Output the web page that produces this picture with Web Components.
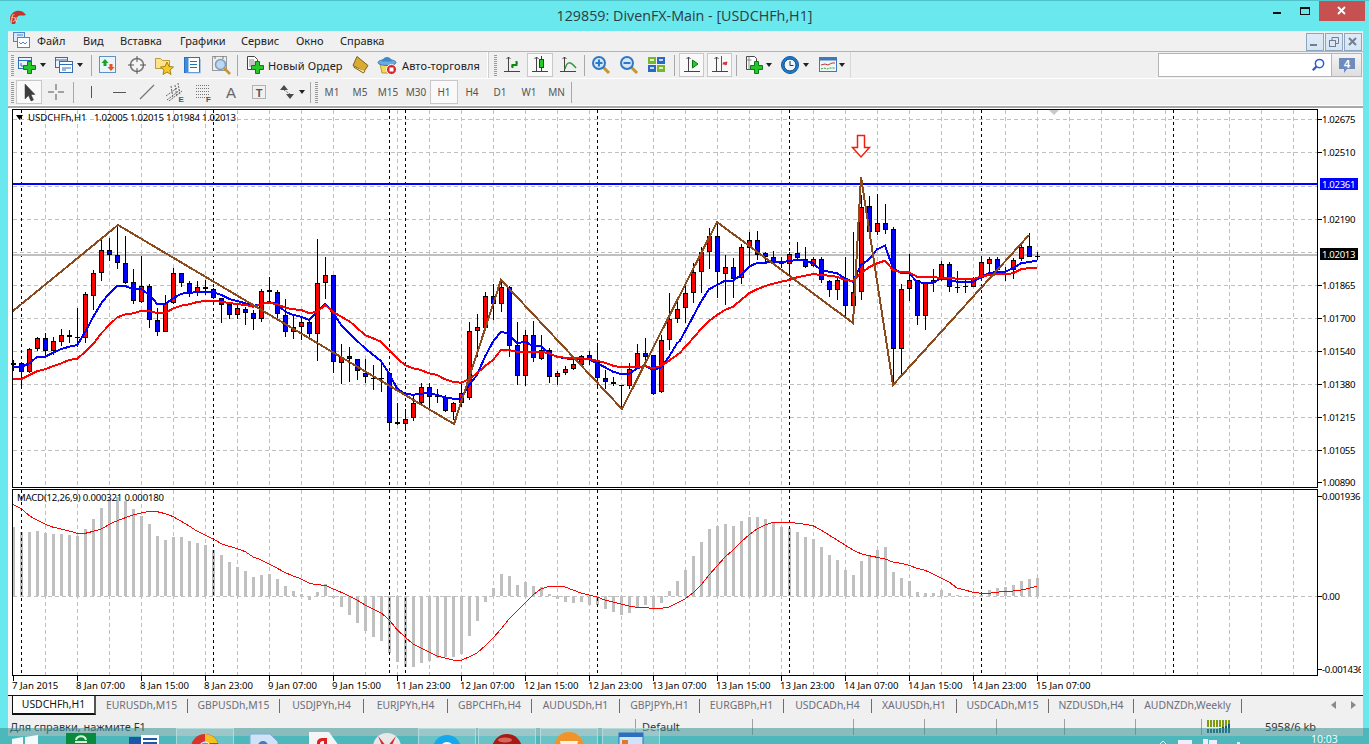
<!DOCTYPE html>
<html lang="ru"><head><meta charset="utf-8"><title>MT4</title>
<style>
html,body{margin:0;padding:0;height:744px;overflow:hidden;background:#69e8ee;font-family:"Noto Sans","Liberation Sans",sans-serif;}
</style></head><body>
<x-app>
  <x-titlebar>129859: DivenFX-Main - [USDCHFh,H1]</x-titlebar>
  <x-window>
    <x-menubar>
      <x-icon name="child" style="margin:0 5px 0 4px"></x-icon>
      <x-menu w="46">Файл</x-menu><x-menu w="37">Вид</x-menu><x-menu w="60">Вставка</x-menu><x-menu w="61">Графики</x-menu><x-menu w="55">Сервис</x-menu><x-menu w="44">Окно</x-menu><x-menu w="50">Справка</x-menu>
      <x-mdi slot="end" name="min"></x-mdi><x-mdi slot="end" name="restore"></x-mdi><x-mdi slot="end" name="close"></x-mdi>
    </x-menubar>
    <x-row style="height:27px">
      <x-group w="479">
        <x-grip></x-grip>
        <x-tool w="22"><x-icon name="new"></x-icon></x-tool><x-dd w="10"></x-dd>
        <x-tool w="22" ml="5"><x-icon name="prof"></x-icon></x-tool><x-dd w="10"></x-dd><x-sep w="12"></x-sep>
        <x-tool w="22"><x-icon name="market"></x-icon></x-tool>
        <x-tool w="28" ml="4"><x-icon name="nav"></x-icon></x-tool>
        <x-tool w="26"><x-icon name="folder"></x-icon></x-tool>
        <x-tool w="28" ml="1"><x-icon name="term"></x-icon></x-tool>
        <x-tool w="20" ml="5"><x-icon name="tester"></x-icon></x-tool><x-sep w="12"></x-sep>
        <x-tool w="22" ml="1"><x-icon name="order"></x-icon></x-tool><x-label w="77" ml="2">Новый Ордер</x-label>
        <x-tool w="22" ml="4"><x-icon name="book"></x-icon></x-tool>
        <x-tool w="22" ml="5"><x-icon name="auto"></x-icon></x-tool><x-label w="80" ml="4">Авто-торговля</x-label>
      </x-group>
      <x-group w="364" edge>
        <x-grip style="margin-left:3px"></x-grip>
        <x-tool w="26"><x-icon name="bar"></x-icon></x-tool>
        <x-tool w="26" ml="2" on><x-icon name="candle"></x-icon></x-tool>
        <x-tool w="28" ml="1"><x-icon name="line"></x-icon></x-tool><x-sep w="4"></x-sep>
        <x-tool w="28" ml="1"><x-icon name="zin"></x-icon></x-tool>
        <x-tool w="28"><x-icon name="zout"></x-icon></x-tool>
        <x-tool w="28"><x-icon name="tile"></x-icon></x-tool><x-sep w="6"></x-sep>
        <x-tool w="25" ml="2" on><x-icon name="scroll"></x-icon></x-tool>
        <x-tool w="25" ml="3" on><x-icon name="shift"></x-icon></x-tool><x-sep w="8"></x-sep>
        <x-tool w="23" ml="2"><x-icon name="ind"></x-icon></x-tool><x-dd w="7"></x-dd>
        <x-tool w="22" ml="7"><x-icon name="clock"></x-icon></x-tool><x-dd w="9"></x-dd>
        <x-tool w="23" ml="6"><x-icon name="tpl"></x-icon></x-tool><x-dd w="6"></x-dd>
      </x-group>
      <x-search></x-search>
    </x-row>
    <x-row style="height:27px">
      <x-group w="563">
        <x-grip></x-grip>
        <x-tool w="26" on><x-icon name="cursor"></x-icon></x-tool>
        <x-tool w="28"><x-icon name="cross"></x-icon></x-tool><x-sep w="6"></x-sep>
        <x-tool w="28" ml="1"><x-icon name="vline"></x-icon></x-tool>
        <x-tool w="28"><x-icon name="hline"></x-icon></x-tool>
        <x-tool w="28"><x-icon name="trend"></x-icon></x-tool>
        <x-tool w="28"><x-icon name="chan"></x-icon></x-tool>
        <x-tool w="28"><x-icon name="fib"></x-icon></x-tool>
        <x-tool w="28"><x-icon name="atext"></x-icon></x-tool>
        <x-tool w="28"><x-icon name="tbox"></x-icon></x-tool>
        <x-tool w="24" ml="2"><x-icon name="arrows"></x-icon></x-tool><x-dd w="6"></x-dd>
        <x-sep w="8" ml="1"></x-sep><x-grip style="width:4px"></x-grip>
        <x-period>M1</x-period><x-period>M5</x-period><x-period>M15</x-period><x-period>M30</x-period>
        <x-period on>H1</x-period><x-period>H4</x-period><x-period>D1</x-period><x-period style="margin-left:1px">W1</x-period><x-period style="width:27px">MN</x-period>
        <x-sep w="2"></x-sep>
      </x-group>
    </x-row>
    <x-chart></x-chart>
    <x-tabs>
      <x-tab w="84" on>USDCHFh,H1</x-tab><x-tab w="92">EURUSDh,M15</x-tab><x-tab w="92">GBPUSDh,M15</x-tab><x-tab w="84">USDJPYh,H4</x-tab><x-tab w="84">EURJPYh,H4</x-tab><x-tab w="84">GBPCHFh,H4</x-tab><x-tab w="88">AUDUSDh,H1</x-tab><x-tab w="80">GBPJPYh,H1</x-tab><x-tab w="84">EURGBPh,H1</x-tab><x-tab w="88">USDCADh,H4</x-tab><x-tab w="85">XAUUSDh,H1</x-tab><x-tab w="92">USDCADh,M15</x-tab><x-tab w="85">NZDUSDh,H4</x-tab><x-tab w="108">AUDNZDh,Weekly</x-tab>
    </x-tabs>
    <x-status></x-status>
  </x-window>
  <x-taskbar></x-taskbar>
</x-app>
<script>
const plus=(x,y,a=2,b=6)=>{const c=(dx,dy)=>`${x+dx},${y+dy}`;return `<polygon points="${[[-a,-b],[a,-b],[a,-a],[b,-a],[b,a],[a,a],[a,b],[-a,b],[-a,a],[-b,a],[-b,-a],[-a,-a]].map(p=>c(p[0],p[1])).join(' ')}" fill="#27c62b" stroke="#0b7d12"/>`};
const axes='<path d="M6.5 2v15M2 16.5h16" stroke="#444" fill="none"/><path d="M4.5 4l2-2 2 2" stroke="#444" fill="none"/>';
const lens=(m)=>`<path d="M12 12l6 6" stroke="#c9952b" stroke-width="3"/><circle cx="8" cy="8" r="6" fill="#d3e7f8" stroke="#2f78c4" stroke-width="2"/><path d="${m}" stroke="#2f78c4" stroke-width="2"/>`;
const ICONS={
child:`<rect x="1.5" y="1.5" width="11" height="9" fill="#dbe9fa" stroke="#4a86c8"/><rect x="5.5" y="6.5" width="12" height="10" fill="#fff" stroke="#4a86c8"/><path d="M5 4h6M7 11l2 2 2-2 2 2 2-2" stroke="#4a86c8" fill="none"/>`,
new:`<rect x="1.5" y="2.5" width="13" height="11" fill="#eaf3ff" stroke="#2f6db5"/><path d="M2 5.5h12M4 8v3h4" stroke="#2f6db5" fill="none"/>`+plus(12.5,12.5),
prof:`<rect x="1.5" y="2.5" width="12" height="10" fill="#eaf3ff" stroke="#2f6db5"/><rect x="5.5" y="6.5" width="13" height="11" fill="#fff" stroke="#2f6db5"/><path d="M2 5h11M6 9.5h12M8 13h9M8 15h4" stroke="#2f6db5" fill="none"/>`,
market:`<rect x="1.5" y="1.5" width="16" height="16" fill="#eaf4fb" stroke="#5b93c9"/><path d="M7 4l3.500 4H8.500v3h-3V8H3.500z" fill="#1aa41e"/><path d="M13 16l-3.500-4H11.500V9h3v3h2z" fill="#e2552a"/>`,
nav:`<circle cx="10" cy="10" r="6.500" fill="#f5f5f5" stroke="#777" stroke-width="1.500"/><path d="M10 1v6M10 13v6M1 10h6M13 10h6" stroke="#555"/>`,
folder:`<path d="M1.500 3.500h5l2 2h7v8h-14z" fill="#fbe48c" stroke="#bd9a38"/><polygon points="13,7 15,11.500 19.500,12 16,15 17,19.500 13,17 9,19.500 10,15 6.500,12 11,11.500" fill="#f6c92a" stroke="#a8820c"/>`,
term:`<rect x="2.500" y="2.500" width="15" height="15" fill="#fff" stroke="#2b6fc0"/><rect x="3" y="3" width="3.500" height="14" fill="#3f8de0"/><path d="M8 6.500h7M8 9.500h7M8 12.500h7" stroke="#27a" /><path d="M18.500 4v14H4" stroke="#a9c6e6" fill="none"/>`,
tester:`<rect x="1.500" y="1.500" width="14" height="14" fill="#f0eeea" stroke="#999"/><path d="M4 1v3M12 1v3" stroke="#777"/><circle cx="9.500" cy="9.500" r="5" fill="#bcd8f0" stroke="#7a9cc0" stroke-width="1.500"/><path d="M13 13l6 6" stroke="#c9952b" stroke-width="2.500"/>`,
order:`<path d="M2.500 1.500h7l3 3v10h-10z" fill="#fff" stroke="#444"/><path d="M4 5h5M4 7h7M4 9h6M4 11h4" stroke="#888"/>`+plus(12.5,12.5),
book:`<path d="M7 1.500l11 9-4 6-11-6z" fill="#d9ab33" stroke="#7d6114"/><path d="M3.500 12l10 6 1.500-2" fill="#f6e6a8" stroke="#7d6114"/>`,
auto:`<path d="M3 9h14l-1 9H5z" fill="#f3d65c" stroke="#b89a2e"/><ellipse cx="10" cy="7.500" rx="9" ry="3" fill="#6aacdf" stroke="#3678b8"/><path d="M5 6.500c1-6 9-6 10 0z" fill="#3f88ca"/><circle cx="14.500" cy="14.500" r="5" fill="#d5242b" stroke="#fff"/><rect x="12.500" y="12.500" width="4" height="4" fill="#fff"/>`,
bar:axes+`<path d="M10.500 13v-3h4V6" stroke="#0a8a14" stroke-width="2" fill="none"/><path d="M9 11h2M14 8h2" stroke="#0a8a14"/>`,
candle:axes+`<path d="M11.500 1v15" stroke="#0a5a12"/><rect x="9.500" y="4.500" width="4" height="8" fill="#22cc26" stroke="#0a5a12"/>`,
line:axes+`<path d="M7 14c2-8 5-8 11-1" stroke="#2f9a3a" stroke-width="1.500" fill="none"/>`,
zin:lens("M4.500 8h7M8 4.500v7"),
zout:lens("M4.500 8h7"),
tile:`<rect x="1" y="2" width="8" height="7" fill="#74b82c"/><rect x="10" y="2" width="8" height="7" fill="#2a68c8"/><rect x="1" y="10" width="8" height="7" fill="#2a68c8"/><rect x="10" y="10" width="8" height="7" fill="#74b82c"/><path d="M3 5h4M12 5h4M3 13h4M12 13h4" stroke="#fff" stroke-width="1.500"/>`,
scroll:axes+`<polygon points="10.500,5 10.500,13 16,9" fill="#22cc26" stroke="#0a7a12"/>`,
shift:axes+`<path d="M11.500 1v15" stroke="#2b5fc0"/><path d="M13 8l4-1-1 3z M12.500 9h4" fill="#d8323a" stroke="#d8323a"/>`,
ind:`<path d="M2.500 1.500h8l2 2v11h-10z" fill="#fff" stroke="#444"/><path d="M5 1.500v13M2.500 5h5" stroke="#888"/>`+plus(12.5,12.5),
clock:`<circle cx="10" cy="10" r="8.500" fill="#1f7fd2" stroke="#11559c"/><circle cx="10" cy="10" r="6" fill="#eef6fb" stroke="#0d3f76"/><path d="M10 6v4.500h3.500" stroke="#333" fill="none"/>`,
tpl:`<rect x="1.500" y="2.500" width="17" height="14" fill="#eef5fb" stroke="#3f78b8"/><rect x="1.500" y="2.500" width="17" height="3" fill="#3f78b8"/><path d="M3 10l4-1 3 1 4-2 3 0" stroke="#c8342a" fill="none"/><path d="M3 14l3-1 3 1 3-1 5 0" stroke="#3aa03a" stroke-dasharray="2 1" fill="none"/>`,
cursor:`<path d="M6 2v15l3.500-3.500 2.500 5.500 2.500-1-2.500-5.500H16z" fill="#3c3c3c" stroke="#3c3c3c" stroke-width=".5"/>`,
cross:`<path d="M10 2v6M10 12v6M2 10h6M12 10h6" stroke="#555"/>`,
vline:`<path d="M10.500 4v12" stroke="#555"/>`,
hline:`<path d="M4 10.500h13" stroke="#555"/>`,
trend:`<path d="M3 17L17 3" stroke="#777" stroke-width="1.200"/>`,
chan:`<path d="M1 14L12 6M2 18L15 8M4 19L17 9M6 4l2 12M10 3l2 12M13 1l2 12" stroke="#666" stroke-dasharray="2 1"/><text x="13.500" y="20" font-size="8" font-weight="700" fill="#555" font-family="Liberation Sans">E</text>`,
fib:`<path d="M3 3.500h14M3 6.500h14M3 9.500h14M3 12.500h14M3 15.500h14" stroke="#777" stroke-dasharray="1 1"/><text x="13" y="20" font-size="8" font-weight="700" fill="#555" font-family="Liberation Sans">F</text>`,
atext:`<text x="10" y="16" font-size="15" text-anchor="middle" fill="#666" font-family="Liberation Sans">A</text>`,
tbox:`<rect x="3.500" y="3.500" width="13" height="13" fill="none" stroke="#777" stroke-dasharray="1 1"/><text x="10" y="15" font-size="11" font-weight="700" text-anchor="middle" fill="#555" font-family="Liberation Sans">T</text>`,
arrows:`<path d="M3 8l4-5 4 5z M9 12h8l-4 5z" fill="#4a4a4a"/><path d="M7 8l6 4" stroke="#4a4a4a" stroke-dasharray="1 1"/>`,
search:`<path d="M3 17l5-5" stroke="#2a5fc8" stroke-width="3"/><circle cx="12" cy="8" r="5.500" fill="#fff" stroke="#2a5fc8" stroke-width="2"/>`
};
class Base extends HTMLElement{
  constructor(){super();this.attachShadow({mode:'open'});this.shadowRoot.innerHTML=this.constructor.html||'';}
  connectedCallback(){const w=this.getAttribute('w'),m=this.getAttribute('ml');if(w)this.style.width=w+'px';if(m)this.style.marginLeft=m+'px';this.init&&this.init();}
}
const def=(n,html,init)=>{const C=class extends Base{};C.html=html;if(init)C.prototype.init=init;customElements.define(n,C);};
def('x-app',`<style>:host{display:flex;flex-direction:column;width:1369px;height:744px;position:relative;overflow:hidden;color:#222}</style><slot></slot>`);
def('x-titlebar',`<style>:host{display:grid;grid-template-columns:1fr auto 1fr;height:31px;flex:none;box-sizing:border-box;border-top:1px solid #4fc3c9}
.l{padding:7px 0 0 9px}.t{font:14.3px "Open Sans","Noto Sans",sans-serif;color:#2c3d42;padding-top:5px;white-space:nowrap}
.r{display:flex;justify-content:flex-end;padding-right:4px;align-items:flex-start}.b{width:28px;height:20px;display:flex;align-items:center;justify-content:center}
.x{width:46px;height:20px;background:#c75050;display:flex;align-items:center;justify-content:center}</style>
<div class="l"><svg width="19" height="16" viewBox="0 0 19 16"><path d="M1 9C2 1 13-1 17 6c-3 1-6 0-8 1L6 15H2z" fill="#c4342c"/><text x="1.500" y="13" font-size="10" font-style="italic" font-family="Liberation Serif" fill="#f6dcd6">fx</text></svg></div>
<div class="t"><slot></slot></div>
<div class="r"><div class="b" style="padding-top:2px"><svg width="9" height="4"><rect y="1" width="8" height="2" fill="#111"/></svg></div><div class="b"><svg width="11" height="9"><rect x=".5" y=".5" width="9" height="7" fill="none" stroke="#111"/><rect x="0" y="0" width="10" height="2" fill="#111"/></svg></div><div class="x"><svg width="10" height="10"><path d="M1 1l7 7M8 1L1 8" stroke="#fff" stroke-width="1.800"/></svg></div></div>`);
def('x-window',`<style>:host{display:flex;flex-direction:column;margin-left:8px;width:1355px;height:705px;background:#f0f0f0;flex:none}</style><slot></slot>`);
def('x-menubar',`<style>:host{display:flex;align-items:center;height:21px;flex:none;box-sizing:border-box;border-bottom:1px solid #b4b4b4;font:11px "Noto Sans",sans-serif}
.e{margin-left:auto;display:flex;gap:1px;padding-right:1px;align-items:flex-start;margin-top:1px}</style><slot></slot><div class="e"><slot name="end"></slot></div>`);
def('x-menu',`<style>:host{display:block;flex:none;color:#222;line-height:20px;white-space:nowrap}</style><slot></slot>`);
def('x-mdi',`<style>:host{display:flex;width:18px;height:18px;box-sizing:border-box;border:1px solid #8ea6bd;background:linear-gradient(#dfeaf6,#d7e6f5);align-items:center;justify-content:center}</style><svg width="12" height="12" viewBox="0 0 12 12"></svg>`,function(){const n=this.getAttribute('name');this.shadowRoot.querySelector('svg').innerHTML={min:'<rect x="1" y="8" width="7" height="2" fill="#6f7f90"/>',restore:'<rect x="1.500" y="4.500" width="6" height="6" fill="none" stroke="#6f7f90"/><path d="M4 4V1.500h6.500v6H8" fill="none" stroke="#6f7f90"/>',close:'<path d="M2 2l7 7M9 2L2 9" stroke="#6f7f90" stroke-width="2"/>'}[n];});
def('x-row',`<style>:host{display:flex;flex:none;box-sizing:border-box;border-bottom:1px solid #fff;align-items:center;position:relative}</style><slot></slot>`);
def('x-group',`<style>:host{display:flex;align-items:center;height:100%;flex:none;box-sizing:border-box}:host([edge]){border-left:1px solid #fff;box-shadow:inset 1px 0 0 #d0d0d0;border-right:1px solid #d8d8d8;}</style><slot></slot>`);
def('x-grip',`<style>:host{display:flex;justify-content:center;width:8px;height:21px;flex:none}i{display:block;width:3px;height:100%;background:repeating-linear-gradient(#9a9a9a 0 1px,#f0f0f0 1px 2px)}</style><i></i>`);
def('x-sep',`<style>:host{display:flex;justify-content:center;height:21px;flex:none}i{display:block;width:1px;height:100%;background:#a8a8a8}</style><i></i>`);
def('x-tool',`<style>:host{display:flex;align-items:center;justify-content:center;height:24px;flex:none;box-sizing:border-box}:host([on]){background:#f9f9f9;box-shadow:inset 0 0 0 1px #c8c8c8}</style><slot></slot>`);
def('x-period',`<style>:host{display:flex;align-items:center;justify-content:center;width:28px;height:24px;flex:none;box-sizing:border-box;color:#555;font:10px "Noto Sans",sans-serif}:host([on]){background:#f9f9f9;box-shadow:inset 0 0 0 1px #c8c8c8}</style><slot></slot>`);
def('x-label',`<style>:host{display:block;flex:none;font:11px "Noto Sans",sans-serif;letter-spacing:.12px;color:#222;white-space:nowrap}</style><slot></slot>`);
def('x-dd',`<style>:host{display:flex;align-items:center;justify-content:center;height:20px;flex:none}i{display:block;border:3.5px solid transparent;border-top:4px solid #222;border-bottom:0}</style><i></i>`);
def('x-icon',`<style>:host{display:inline-flex;flex:none}svg{display:block;overflow:visible}</style><svg width="20" height="20" viewBox="0 0 20 20"></svg>`,function(){this.shadowRoot.querySelector('svg').innerHTML=ICONS[this.getAttribute('name')]||'';});
def('x-search',`<style>:host{display:flex;margin-left:auto;margin-right:1px;height:24px;flex:none;box-sizing:border-box}
.i{width:174px;background:#fff;border:1px solid #b5b5b5;box-sizing:border-box;display:flex;justify-content:flex-end;align-items:center;padding-right:3px}
.b{width:30px;box-sizing:border-box;border:1px solid #b5b5b5;border-left:0;background:linear-gradient(#f4f4f4,#dedede);display:flex;align-items:center;justify-content:center}</style>
<div class="i"><x-icon name="search" style="transform:scale(.75)"></x-icon></div>
<div class="b"><svg width="18" height="17" viewBox="0 0 18 17"><path d="M1 1h16v11H9l-3 4v-4H1z" fill="#6f8bbd"/><text x="9" y="11" font-size="11" font-weight="700" text-anchor="middle" fill="#fff" font-family="Liberation Sans">4</text></svg></div>`);
def('x-tabs',`<style>:host{display:flex;height:21px;flex:none;box-sizing:border-box;border-top:1px solid #111;padding-left:4px;position:relative;font:10.4px "Noto Sans",sans-serif}
.a{margin-left:auto;display:flex;gap:8px;padding:5px 7px 0 0;}.a i{display:block;width:0;height:0;border:4px solid transparent}</style><slot></slot>
<div class="a"><i style="border-right:5px solid #8a8a8a;border-left:0"></i><i style="border-left:5px solid #8a8a8a;border-right:0;margin-left:7px"></i></div>`);
def('x-tab',`<style>:host{display:flex;align-items:center;justify-content:center;flex:none;box-sizing:border-box;color:#6d6e7a;border-right:1px solid #6d6d6d;white-space:nowrap;height:14px;margin-top:3px;padding-bottom:2px}
:host([on]){background:#fff;color:#111;border:1px solid #111;border-top:0;border-bottom:2px solid #111;border-right:2px solid #555;height:19px;margin-top:0;padding-bottom:2px}</style><slot></slot>`);
def('x-status',`<style>:host{display:flex;height:20px;flex:none;font:11px "Noto Sans",sans-serif;color:#333;margin-top:0;position:relative}
div{box-sizing:border-box;border-left:1px solid #a0a0a0;height:16px;margin-top:3px;flex:none;white-space:nowrap;padding-left:6px;line-height:15px}
.f{border:0;padding-left:2px}</style>
<div class="f" style="width:627px">Для справки, нажмите F1</div><div style="width:117px">Default</div><div style="width:101px"></div><div style="width:71px"></div><div style="width:72px"></div><div style="width:68px"></div><div style="width:71px"></div><div style="width:66px"></div>
<div style="width:59px;padding-left:5px"><svg width="24" height="14" viewBox="0 0 24 14"><path d="M1 1v7M4 1v7M7 1v7M10 1v7M13 1v7M16 1v7M19 1v7M22 1v7" stroke="#7d9a10" stroke-width="2"/><path d="M1 10v4M4 10v4M7 10v4M10 10v4M13 9v5M16 8v6M19 7v7M22 5v9" stroke="#16597e" stroke-width="2"/></svg></div>
<div style="border:0;padding-left:5px">5958/6 kb</div>`);
def('x-taskbar',`<style>:host{position:absolute;left:0;right:0;top:728px;height:16px;background:rgba(54,143,147,.55);overflow:hidden;display:block}
.r{display:flex;height:100%;position:relative}
.s{width:58px;height:30px;box-sizing:border-box;flex:none;display:flex;justify-content:center;padding-top:5px}
.o{border:1px solid rgba(190,225,225,.75);background:rgba(255,255,255,.16)}
svg{display:block;flex:none}
.t{position:absolute;left:1311px;top:4px;color:#fff;font:10.5px "Open Sans",sans-serif;line-height:14px}
.tray{position:absolute;top:11px;left:0}</style>
<div class="r">
<div class="s" style="width:50px;padding-top:7px"><svg width="26" height="26"><path d="M0 4l11-2v10H0zM13 2l13-2v12H13z" fill="#f4fbfb"/></svg></div>
<div class="s" style="width:62px;padding-top:5px"><svg width="30" height="30"><rect width="30" height="30" fill="#0a8a3c"/><path d="M10 7c1-5 9-5 10 0M9 9h12" stroke="#d8f5d8" stroke-width="2" fill="none"/></svg></div>
<div class="s" style="width:64px;padding-top:7px"><svg width="30" height="30"><rect x="0" y="2" width="20" height="28" fill="#1d56a8"/><rect x="12" y="0" width="18" height="30" fill="#fff"/><path d="M14 4h14M14 8h14" stroke="#1d56a8" stroke-width="2"/></svg></div>
<div class="s o"><svg width="28" height="28"><circle cx="14" cy="14" r="14" fill="#d8342c"/><path d="M14 0a14 14 0 0 1 13 9H14z" fill="#f4c21f"/><circle cx="14" cy="14" r="6" fill="#4f9be8" stroke="#fff"/></svg></div>
<div class="s" style="padding-top:4px"><svg width="30" height="30"><path d="M2 2h20l8 8v20H2z" fill="#cfe2f6" stroke="#7fa9d8"/><circle cx="15" cy="14" r="5" fill="#3c7cc4"/></svg></div>
<div class="s" style="width:64px;padding-top:4px"><svg width="30" height="30"><path d="M0 0h20l10 14v16H0z" fill="#f5f5f5"/><path d="M8 11c0-4 3-5 6-5h4v20h-3V9c-2 0-4 0-4 3 0 2 1 3 3 3v2c-4 0-6-2-6-6z" fill="#e02020"/></svg></div>
<div class="s" style="width:62px;padding-top:4px"><svg width="30" height="30"><circle cx="15" cy="15" r="14" fill="#e8e8e8"/><path d="M6 4l9 11 9-11-6 14H12z" fill="#d8242c"/></svg></div>
<div class="s o"><svg width="30" height="30"><circle cx="15" cy="15" r="14" fill="#13a9ec"/><circle cx="15" cy="15" r="7" fill="#fff"/></svg></div>
<div class="s o" style="margin-left:2px"><svg width="30" height="30"><circle cx="15" cy="15" r="15" fill="#a61c14"/><ellipse cx="13" cy="6" rx="7" ry="2.500" fill="#d8665c"/></svg></div>
<div class="s o" style="margin-left:4px;padding-top:3px"><svg width="30" height="30"><circle cx="15" cy="15" r="15" fill="#f2932a"/><path d="M6 9h18l-2 9H8z" fill="#fff3de"/></svg></div>
<div class="s o" style="margin-left:4px;padding-top:3px"><svg width="26" height="30"><rect x="1" y="1" width="24" height="22" fill="#cfe4fb" stroke="#2c6fc0"/><rect x="1" y="1" width="24" height="4" fill="#2c6fc0"/><rect x="4" y="8" width="6" height="6" fill="#e0782a"/></svg></div>
</div>
<div class="tray"><svg width="1300" height="6" viewBox="0 0 1300 6"><path d="M1160 5l3-3 3 3" stroke="#fff" fill="none"/><rect x="1178" y="1" width="14" height="5" fill="#eef"/><rect x="1203" y="0" width="5" height="6" fill="#eef"/><rect x="1209" y="1" width="8" height="5" fill="#eef"/><rect x="1237" y="3" width="3" height="3" fill="#eef"/></svg></div>
<div class="t">10:03</div>`);
/* chart */
const ma=(arrs)=>arrs.flatMap(([x0,y0,pts])=>pts.map(p=>[x0+p[0]/3,y0+p[1]/3]));
const Z7=[[41,480,490,495,512,'b'],[65,485,490,515,560,'b'],[88,445,448,515,518,'r'],[112,410,415,446,452,'r'],[136,400,415,452,465,'b'],[160,412,424,452,465,'r'],[184,388,406,425,438,'r'],[208,390,406,412,430,'b'],[232,323,412,415,440,'k'],[256,275,283,415,428,'r'],[280,210,220,287,330,'r'],[304,112,151,220,243,'r'],[328,113,151,166,183,'b'],[352,75,166,190,207,'b'],[376,108,190,248,252,'b'],[400,207,247,304,311,'b'],[424,168,259,305,310,'r'],[448,252,259,361,383,'b'],[472,325,361,397,407,'b'],[496,285,310,397,397,'r'],[520,205,220,310,312,'r'],[544,220,220,248,262,'b'],[568,243,248,278,291,'b'],[592,243,260,278,288,'r'],[616,240,260,268,285,'b'],[640,265,268,293,295,'b'],[664,293,293,314,368,'b'],[688,313,313,344,356,'b'],[712,316,325,344,356,'r'],[736,320,328,338,374,'b'],[760,330,340,358,390,'b'],[784,268,272,358,365,'r'],[808,232,271,277,305,'b'],[832,270,277,343,355,'b'],[856,297,346,395,410,'b'],[880,348,382,397,416,'r'],[904,350,367,382,420,'r'],[928,360,367,403,415,'b'],[952,118,250,403,483,'r'],[976,172,226,250,298,'r'],[1000,226,226,487,518,'b'],[1024,432,470,490,553,'r'],[1048,440,468,476,545,'b']];
const Z8=[[298,298,334,360,'b'],[298,338,352,370,'b'],[315,355,358,390,'k'],[305,355,358,395,'k'],[340,340,490,510,'b'],[430,487,493,495,'b'],[448,476,493,510,'r'],[405,430,475,482,'r'],[370,382,430,435,'r'],[370,382,410,450,'b'],[388,408,412,430,'k'],[405,410,452,456,'b'],[425,430,455,480,'r'],[370,400,430,440,'r'],[185,214,415,420,'r'],[162,202,214,290,'r'],[97,109,203,210,'r'],[72,109,131,180,'b'],[60,82,131,155,'r'],[78,80,257,290,'b'],[186,256,349,374,'b'],[210,226,349,378,'r'],[184,226,295,305,'b'],[225,270,298,300,'r'],[265,270,352,368,'b'],[332,340,352,375,'r'],[318,328,340,345,'r'],[300,313,328,330,'r'],[285,287,314,316,'r'],[272,286,300,315,'b'],[250,305,353,385,'b'],[330,355,367,388,'b'],[350,367,373,378,'b'],[374,374,376,445,'k'],[308,328,377,388,'r'],[252,280,325,328,'r'],[235,280,290,320,'b'],[285,286,401,405,'b'],[225,241,397,398,'r'],[100,176,241,270,'r'],[120,148,176,190,'r']];
const Z9=[[455,490,535,578,'r'],[400,425,490,518,'r'],[350,365,425,490,'r'],[295,319,367,417,'r'],[278,319,427,503,'b'],[375,412,431,525,'r'],[385,412,446,505,'b'],[342,352,445,462,'r'],[305,331,353,410,'r'],[303,331,375,390,'b'],[366,370,382,400,'b'],[364,381,395,405,'b'],[380,395,402,415,'b'],[365,373,402,440,'r'],[336,370,385,392,'b'],[352,386,412,415,'b'],[380,386,408,410,'r'],[380,386,450,460,'b'],[450,452,480,500,'b'],[445,449,480,510,'r'],[380,445,527,563,'b'],[305,487,527,570,'r'],[196,230,487,510,'r'],[198,229,305,322,'b'],[192,280,305,315,'r'],[222,278,299,312,'b'],[290,298,658,765,'b'],[462,476,658,740,'r'],[372,451,476,512,'r'],[450,451,559,585,'b'],[455,458,557,600,'r'],[418,450,458,485,'r'],[392,403,450,452,'r'],[396,403,472,486,'b'],[422,470,472,490,'k'],[450,468,470,488,'k'],[440,443,470,472,'r'],[382,397,445,447,'r'],[380,388,401,425,'r'],[382,388,420,425,'b'],[410,428,430,453,'k'],[383,390,420,446,'r'],[340,350,388,392,'r'],[310,349,380,380,'b'],[366,377,378,390,'k']];
const CANDLES=[...Z7.map((c,i)=>[13+8*i,...c.slice(1,5).map(v=>200+v/3),c[5]]),...Z8.map((c,i)=>[357+8*i,...c.slice(0,4).map(v=>260+v/3),c[4]]),...Z9.map((c,i)=>[685+8*i,...c.slice(0,4).map(v=>130+v/3),c[4]])];
const B7=[[38,500],[65,500],[88,490],[112,470],[136,470],[160,458],[184,447],[208,440],[232,435],[256,395],[280,350],[304,310],[328,280],[352,258],[376,258],[400,267],[424,267],[448,285],[472,312],[496,312],[520,295],[544,281],[568,278],[592,277],[616,276],[640,276],[664,285],[688,297],[712,303],[736,310],[760,318],[784,312],[808,306],[832,313],[856,335],[880,345],[904,350],[928,360],[952,335],[976,312],[1000,340],[1024,375]];
const R7=[[38,537],[65,537],[88,525],[112,513],[136,508],[160,498],[184,490],[208,480],[232,476],[256,455],[280,432],[304,400],[328,375],[352,352],[376,343],[400,340],[424,332],[448,333],[472,339],[496,339],[520,325],[544,317],[568,313],[592,306],[616,303],[640,303],[664,305],[688,309],[712,312],[736,315],[760,320],[784,312],[808,308],[832,313],[856,323],[880,328],[904,330],[928,340],[952,335],[976,315],[1000,337],[1024,350]];
const B8=[[0,222],[45,265],[93,303],[117,340],[141,385],[165,402],[189,404],[213,402],[237,398],[261,405],[285,412],[309,416],[333,416],[357,375],[381,345],[405,290],[429,245],[453,215],[477,222],[501,250],[525,245],[549,258],[573,258],[597,280],[621,290],[645,295],[669,298],[693,298],[717,298],[741,310],[765,322],[789,335],[813,342],[837,342],[861,325],[885,318],[909,330],[933,322],[957,290],[981,250]];
const R8=[[0,185],[45,225],[93,245],[117,270],[141,295],[165,315],[189,325],[213,330],[237,340],[261,345],[285,358],[309,365],[333,368],[357,358],[381,340],[405,318],[429,300],[453,270],[477,270],[501,275],[525,277],[549,277],[573,275],[597,280],[621,290],[645,293],[669,295],[693,295],[717,297],[741,302],[765,308],[789,317],[813,322],[837,322],[861,322],[885,318],[909,325],[933,318],[957,302],[981,285]];
const B9=[[0,632],[39,560],[63,515],[87,478],[111,465],[135,452],[159,452],[183,435],[207,410],[231,399],[255,398],[279,395],[303,397],[327,393],[351,390],[375,392],[399,400],[423,420],[447,425],[471,430],[495,445],[519,455],[543,405],[567,388],[591,358],[615,347],[639,415],[663,428],[687,428],[711,457],[735,458],[759,458],[783,445],[807,450],[831,455],[855,455],[879,455],[903,442],[927,430],[951,425],[975,425],[999,415],[1023,400],[1047,396],[1071,392]];
const R9=[[0,668],[39,625],[63,597],[87,573],[111,555],[135,540],[159,530],[183,510],[207,490],[231,478],[255,468],[279,461],[303,455],[327,450],[351,442],[375,437],[399,432],[423,435],[447,437],[471,440],[495,450],[519,453],[543,430],[567,412],[591,400],[615,392],[639,420],[663,427],[687,427],[711,440],[735,442],[759,442],[783,443],[807,443],[831,446],[855,447],[879,447],[903,440],[927,435],[951,433],[975,433],[999,430],[1023,418],[1047,414],[1071,413]];
const HIST=[126,141,141,138,144,147,147,150,153,132,102,69,42,35,48,72,93,117,153,165,156,156,168,174,180,195,210,231,246,258,276,270,267,282,303,318,327,345,322,297,339,366,390,414,438,456,468,504,531,
546,546,534,528,519,516,516,507,453,408,351,309,267,273,300,291,303,306,327,342,351,354,351,360,360,372,381,390,384,366,360,372,354,318,288,255,213,171,132,123,117,123,108,96,96,102,114,126,129,141,
156,162,186,210,225,255,270,228,210,195,186,261,279,288,321,324,324,315,324,330,333,333,330,315,309,306,300,288,282,279];
const SIG=ma([[0,485,[[38,58],[65,72],[88,92],[112,106],[136,118],[160,127],[184,132],[208,138],[232,145],[256,145],[280,139],[304,132],[328,118],[352,107],[376,98],[400,90],[424,84],[448,79],[472,80],[496,86],[520,95],[544,109],[568,123],[592,139],[616,151],[640,162],[664,176],[688,184],[712,191],[736,200],[760,216],[784,225],[808,238],[832,250],[856,263],[880,273],[904,282],[928,295],[952,299],[976,301],[1000,312],[1024,322],[1048,333],[1072,346],[1096,360],[1120,372],[1144,384],[1168,405],[1192,435]]],
[400,485,[[15,456],[39,477],[63,489],[87,501],[111,513],[135,519],[159,525],[183,526],[207,516],[231,504],[255,483],[279,459],[303,432],[327,402],[351,378],[375,354],[399,330],[423,312],[447,304],[471,303],[495,306],[519,315],[543,324],[567,330],[591,336],[615,345],[639,351],[663,357],[687,363],[711,367],[735,367],[759,371],[783,370],[807,366],[831,354],[855,342],[879,324],[903,300],[927,270],[951,243],[975,216],[999,195],[1023,171],[1047,150],[1071,132],[1095,120],[1119,112],[1143,112],[1167,112],[1191,115]]]]).concat([118,122,135,150,165,180,195,206,212,217,222,231,235,241,250,256,267,279,291,309,315,322,325,325,322,319,318,315,310,304].map((v,i)=>[805+8*i,485+v/3]));
const pl=(a)=>a.map(p=>p[0].toFixed(1)+','+p[1].toFixed(1)).join(' ');
def('x-chart',`<style>:host{display:block;flex:none;height:589px;width:1355px;background:#fff}svg{display:block}text{font:9.6px "Noto Sans","Liberation Sans",sans-serif;fill:#000}.p{letter-spacing:-.35px}.n{letter-spacing:-.25px}.m{letter-spacing:-.2px}</style><svg width="1355" height="589" viewBox="8 106 1355 589"></svg>`,function(){
 let s='';
 s+='<rect x="8" y="106" width="1355" height="2" fill="#a8a8a8"/>';
 const dashV=(x,y1,y2,c,d)=>`<path d="M${x+.5} ${y1}V${y2}" stroke="${c}" stroke-dasharray="${d}"/>`;
 let g='';
 [119,152,186,219,252,285,318,351,384,417,450].forEach(y=>g+=`<path d="M13 ${y+.5}H1318" stroke="#c0c0c0" stroke-dasharray="4 3"/>`);
 for(let x=45;x<=1293;x+=32){g+=dashV(x,110,487,'#c0c0c0','4 3')+dashV(x,490,675,'#c0c0c0','4 3');}
 g+=`<path d="M13 596.500H1318" stroke="#c0c0c0" stroke-dasharray="4 3"/>`;
 HIST.forEach((t,i)=>{const x=13+8*i,y=485+t/3,h=596-y;g+=`<rect x="${x-1}" y="${Math.round(Math.min(y,596))}" width="3" height="${Math.max(1,Math.round(Math.abs(h)))}" fill="#c0c0c0"/>`});
 [21,213,389,405,597,789,981,1173].forEach(x=>g+=dashV(x,110,487,'#000','3 3')+dashV(x,490,675,'#000','3 3'));
 g+='<rect x="13" y="254" width="1305" height="2" fill="#c0c0c0"/>';
 CANDLES.forEach(([x,h,t,b,l,c])=>{h=Math.round(h);t=Math.round(t);b=Math.round(b);l=Math.round(l);
   g+=`<rect x="${x}" y="${h}" width="1" height="${Math.max(l-h,1)}" fill="#000"/>`;
   if(c==='k')g+=`<rect x="${x-2}" y="${t}" width="5" height="1" fill="#000"/>`;
   else g+=`<rect x="${x-1.5}" y="${t+.5}" width="4" height="${Math.max(b-t-1,1)}" fill="${c==='r'?'#f00':'#00f'}" stroke="#000"/>`;});
 const blue=ma([[0,200,B7],[350,260,B8],[680,130,B9]]),red=ma([[0,200,R7],[350,260,R8],[680,130,R9]]);
 g+=`<polyline points="${pl(blue)}" fill="none" stroke="#00f" stroke-width="2"/>`;
 g+=`<polyline points="${pl(red)}" fill="none" stroke="#f00" stroke-width="2"/>`;
 g+='<rect x="13" y="183" width="1305" height="2" fill="#00f"/>';
 g+=`<polyline points="13,311 118,225 454,424 501,280 622,409 717,222 853,323 861,177 893,385 1029,235" fill="none" stroke="#8b4a1c" stroke-width="2" stroke-linejoin="miter"/>`;
 g+=`<polyline points="${pl(SIG)}" fill="none" stroke="#f00" stroke-width="1"/>`;
 s+=`<g shape-rendering="crispEdges">${g}</g>`;
 s+='<polygon points="857.500,135.500 864.500,135.500 864.500,147.500 869.500,147.500 861,157 852.500,147.500 857.500,147.500" fill="#fff" stroke="#f02010" stroke-width="1.500"/>';
 s+='<polygon points="1049,110 1059,110 1054,115" fill="#c8c8c8"/>';
 s+='<g shape-rendering="crispEdges" fill="none" stroke="#000"><rect x="12.500" y="109.500" width="1305" height="378"/><rect x="12.500" y="489.500" width="1305" height="186"/></g>';
 s+='<polygon points="16,115 23,115 19.500,120" fill="#000"/>';
 s+='<text x="28" y="121">USDCHFh,H1</text><text x="94" y="121" class="n">1.02005 1.02015 1.01984 1.02013</text>';
 s+='<text x="17" y="501" class="m">MACD(12,26,9) 0.000321 0.000180</text>';
 const P=[['1.02675',119],['1.02510',152],['1.02190',219],['1.01865',285],['1.01700',318],['1.01540',351],['1.01380',384],['1.01215',417],['1.01055',450],['1.00890',482],['0.001936',496],['0.00',596],['-0.001436',669]];
 let t='';
 P.forEach(([v,y])=>{t+=`<rect x="1318" y="${y}" width="4" height="1" fill="#000"/><text x="1322" y="${y+4}" class="p">${v}</text>`;});
 t+='<rect x="1320" y="178" width="38" height="12" fill="#00f"/><text x="1322" y="188" class="p" style="fill:#fff">1.02361</text>';
 t+='<rect x="1320" y="248" width="38" height="12" fill="#000"/><text x="1322" y="258" class="p" style="fill:#fff">1.02013</text>';
 s+=`<svg x="1318" y="106" width="43" height="589" viewBox="1318 106 43 589">${t}</svg>`;
 const T=['7 Jan 2015','8 Jan 07:00','8 Jan 15:00','8 Jan 23:00','9 Jan 07:00','9 Jan 15:00','11 Jan 23:00','12 Jan 07:00','12 Jan 15:00','12 Jan 23:00','13 Jan 07:00','13 Jan 15:00','13 Jan 23:00','14 Jan 07:00','14 Jan 15:00','14 Jan 23:00','15 Jan 07:00'];
 T.forEach((v,i)=>{const x=13+64*i;s+=`<rect x="${x}" y="676" width="1" height="5" fill="#000"/><text x="${x-1}" y="689">${v}</text>`;});
 this.shadowRoot.querySelector('svg').innerHTML=s;
});
</script>
</body></html>
